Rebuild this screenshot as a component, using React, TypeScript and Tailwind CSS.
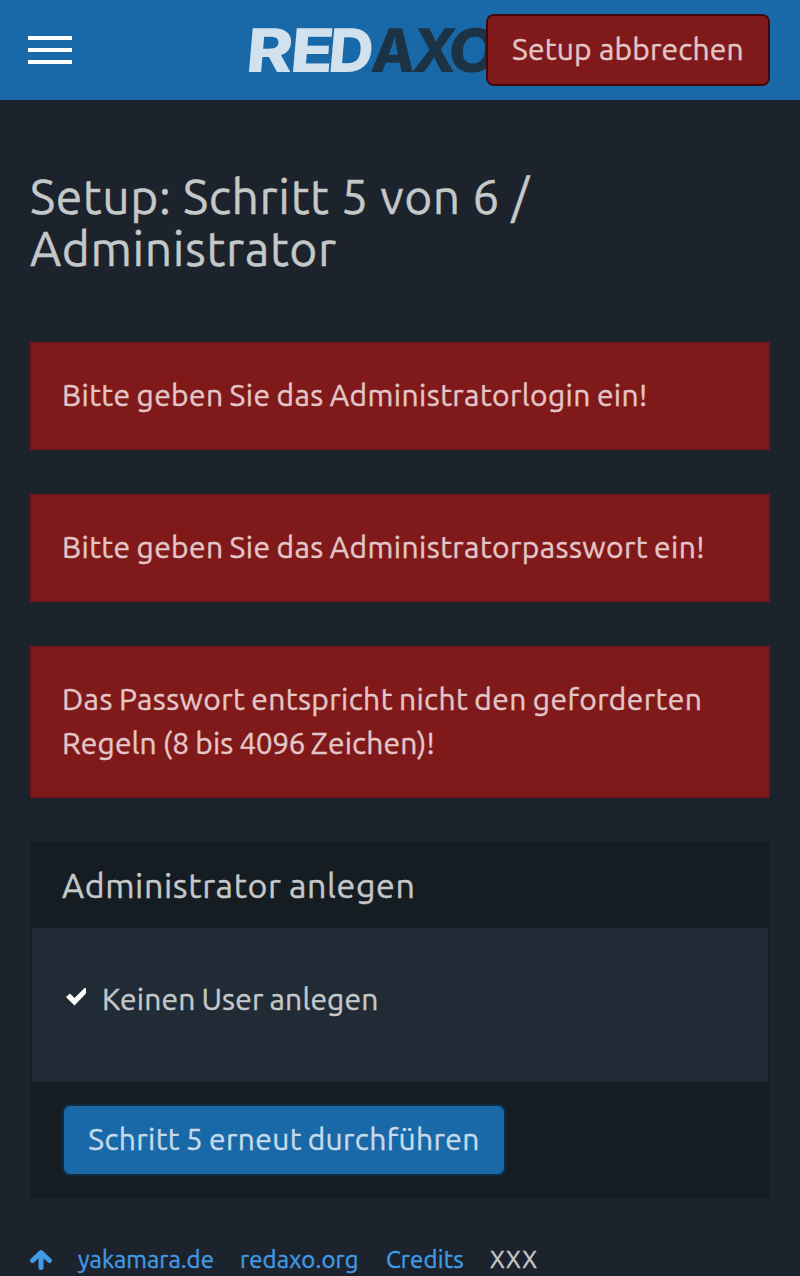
import type { ReactNode } from 'react';

function Alert({ children }: { children: ReactNode }) {
  return (
    <div className="mb-11 border-2 border-[#711518] bg-[#801a1a] px-[30px] pt-[29px] pb-[31px] text-[30px] leading-[44px] tracking-[0.4px] whitespace-nowrap text-[#e3c6c8] [word-spacing:-1.2px]">
      {children}
    </div>
  );
}

function Logo() {
  return (
    <svg className="h-11 w-[252px] shrink-0 overflow-visible" viewBox="0 0 252 44" role="img" aria-label="REDAXO">
      <g transform="translate(0 43.7) skewX(-5)" fontFamily="Inter, sans-serif" fontWeight="800" fontSize="60">
        <g fill="#d1e1ee">
          <text x="-4" y="0" textLength="46.5" lengthAdjust="spacingAndGlyphs">R</text>
          <text x="40" y="0" textLength="43" lengthAdjust="spacingAndGlyphs">E</text>
          <text x="78" y="0" textLength="45" lengthAdjust="spacingAndGlyphs">D</text>
        </g>
        <g fill="#1c3346">
          <text x="121" y="0" textLength="44" lengthAdjust="spacingAndGlyphs">A</text>
          <text x="162" y="0" textLength="44" lengthAdjust="spacingAndGlyphs">X</text>
          <text x="198" y="0" textLength="50" lengthAdjust="spacingAndGlyphs">O</text>
        </g>
      </g>
    </svg>
  );
}

export default function App() {
  return (
    <div className="flex h-[1276px] w-[800px] flex-col overflow-hidden bg-[#1c232c] font-['Ubuntu','Noto_Sans',sans-serif] text-[#c5c8c9] [-webkit-text-stroke-width:0.4px]">
      <header className="flex h-[100px] shrink-0 items-center bg-[#1968a7] pr-[30px] pl-7">
        <button className="flex w-11 shrink-0 flex-col gap-2" aria-label="Menü">
          <span className="h-1 w-full bg-white" />
          <span className="h-1 w-full bg-white" />
          <span className="h-1 w-full bg-white" />
        </button>
        <div className="ml-[177px] w-[237px] shrink-0 [-webkit-text-stroke-width:0px]">
          <Logo />
        </div>
        <button className="z-10 h-[72px] w-[284px] shrink-0 rounded-lg border-2 border-[#40070a] bg-[#801a1a] pb-0.5 text-[30px] tracking-[0.2px] whitespace-nowrap text-[#e3c6c8]">
          Setup abbrechen
        </button>
      </header>

      <main className="px-[30px]">
        <h1 className="mt-[70px] mb-[68px] text-[48px] leading-[52px] tracking-[0.6px] [word-spacing:-0.1px]">
          Setup: Schritt 5 von 6 /<br />Administrator
        </h1>

        <Alert>Bitte geben Sie das Administratorlogin ein!</Alert>
        <Alert>Bitte geben Sie das Administratorpasswort ein!</Alert>
        <Alert>
          Das Passwort entspricht nicht den geforderten<br />
          <span className="tracking-[0.15px]">
            Regeln (8 bis <span className="-tracking-[0.5px]">4096</span> Zeichen)!
          </span>
        </Alert>

        <section className="border-2 border-[#161d22] bg-[#161d22]">
          <h2 className="flex h-[84px] items-center px-[30px] pb-0.5 text-[34px] tracking-[0.6px] [word-spacing:-1px]">Administrator anlegen</h2>
          <div className="h-[154px] bg-[#212b35] px-[30px] pt-[49px]">
            <label className="flex items-center text-[30px] leading-[44px] tracking-[0.15px] [word-spacing:-1px]">
              <svg className="mr-[15px] ml-[3px] h-[19px] w-[22px] -translate-y-[3px]" viewBox="0 0 22 19" aria-hidden="true">
                <path d="M1 10 5 6.5 9.5 11 19.5 1H21V6.5L9.5 18.5Z" fill="#fff" />
              </svg>
              <span>Keinen User anlegen</span>
            </label>
          </div>
          <footer className="flex h-[114px] items-start px-[30px] pt-[22px]">
            <button className="h-[72px] w-[444px] rounded-lg border-2 border-[#0d2b43] bg-[#1968a7] pb-0.5 text-[30px] tracking-[0.38px] whitespace-nowrap text-[#c6dae9] [word-spacing:-1.4px]">
              Schritt 5 erneut durchführen
            </button>
          </footer>
        </section>

        <nav className="mt-11 flex items-center text-[24px] leading-9 whitespace-nowrap text-[#409be4]">
          <svg className="mr-[26px] h-5 w-[22px] shrink-0" viewBox="0 0 22 20" aria-label="Nach oben">
            <path d="M2.6 10.5 11 2.6l8.4 7.9M11 3.5v13.9" fill="none" stroke="currentColor" strokeWidth="5" strokeLinecap="round" strokeLinejoin="round" />
          </svg>
          <a className="w-[162px]">yakamara.de</a>
          <a className="w-[146px] tracking-[0.15px]">redaxo.org</a>
          <a className="w-[104px] tracking-[0.15px]">Credits</a>
          <span className="tracking-[0.8px] text-[#c5c8c9]">XXX</span>
        </nav>
      </main>
    </div>
  );
}
